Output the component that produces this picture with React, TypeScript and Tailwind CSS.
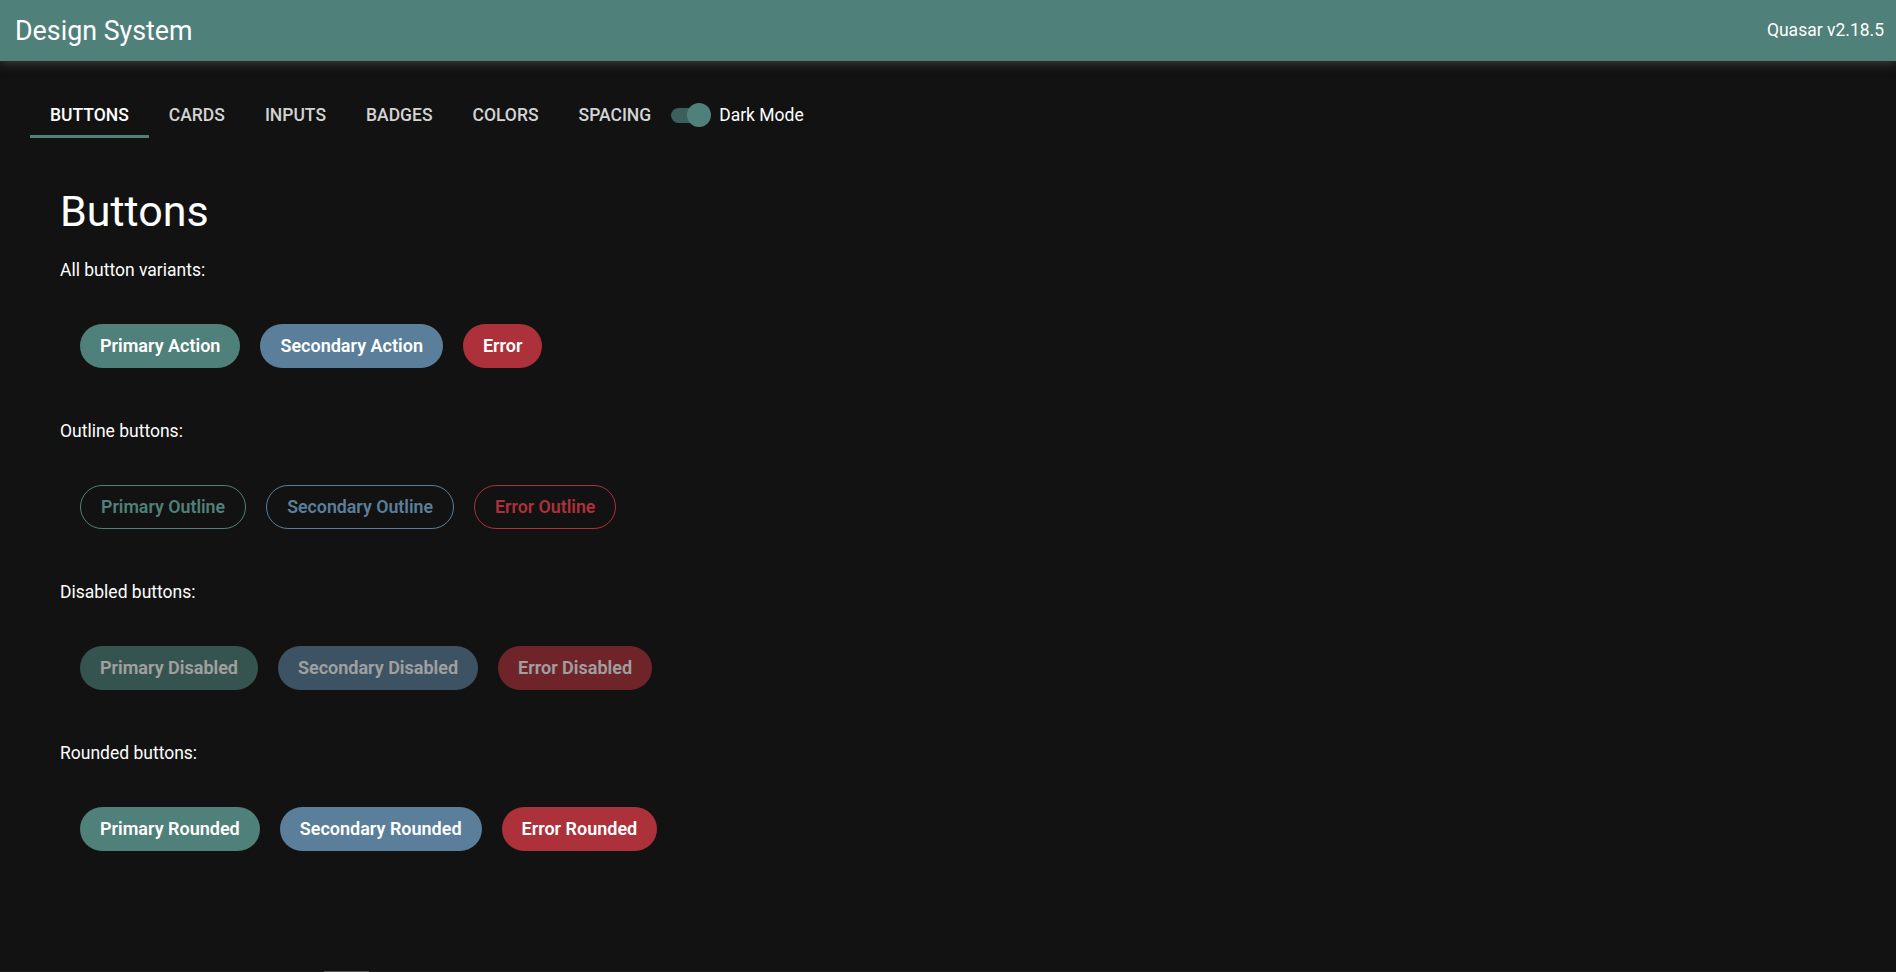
import React from 'react';

type Tone = 'primary' | 'secondary' | 'error';

const solid: Record<Tone, string> = {
  primary: 'bg-[#4f8079] text-white',
  secondary: 'bg-[#5b7f9a] text-white',
  error: 'bg-[#ad313b] text-white',
};

const outline: Record<Tone, string> = {
  primary: 'border border-[#4f8079] text-[#4f8079]',
  secondary: 'border border-[#5b7f9a] text-[#5b7f9a]',
  error: 'border border-[#ad313b] text-[#ad313b]',
};

interface BtnProps {
  label: string;
  tone: Tone;
  variant?: 'solid' | 'outline' | 'disabled';
}

const Btn: React.FC<BtnProps> = ({ label, tone, variant = 'solid' }) => {
  const look =
    variant === 'outline'
      ? `${outline[tone]} text-[17.8px]`
      : variant === 'disabled'
        ? `${solid[tone]} text-[18px] opacity-60 cursor-not-allowed`
        : `${solid[tone]} text-[18px]`;
  return (
    <button
      disabled={variant === 'disabled'}
      className={`h-[44px] px-[20px] rounded-full font-semibold leading-none whitespace-nowrap ${look}`}
    >
      {label}
    </button>
  );
};

const sections: { title: string; variant: 'solid' | 'outline' | 'disabled'; items: [string, Tone][] }[] = [
  {
    title: 'All button variants:',
    variant: 'solid',
    items: [
      ['Primary Action', 'primary'],
      ['Secondary Action', 'secondary'],
      ['Error', 'error'],
    ],
  },
  {
    title: 'Outline buttons:',
    variant: 'outline',
    items: [
      ['Primary Outline', 'primary'],
      ['Secondary Outline', 'secondary'],
      ['Error Outline', 'error'],
    ],
  },
  {
    title: 'Disabled buttons:',
    variant: 'disabled',
    items: [
      ['Primary Disabled', 'primary'],
      ['Secondary Disabled', 'secondary'],
      ['Error Disabled', 'error'],
    ],
  },
  {
    title: 'Rounded buttons:',
    variant: 'solid',
    items: [
      ['Primary Rounded', 'primary'],
      ['Secondary Rounded', 'secondary'],
      ['Error Rounded', 'error'],
    ],
  },
];

const tabs = ['Buttons', 'Cards', 'Inputs', 'Badges', 'Colors', 'Spacing'];

export default function App() {
  const [active, setActive] = React.useState('Buttons');
  const [dark, setDark] = React.useState(true);

  return (
    <div className="h-[972px] overflow-hidden flex flex-col bg-[#121212] font-['Roboto','Liberation_Sans',sans-serif]">
      <header className="relative z-10 h-[61px] shrink-0 flex items-center justify-between pl-[15px] pr-[12px] bg-[#50807a] shadow-[0_2px_10px_rgba(110,110,110,0.5)]">
        <div className="mt-[2px] text-[26.8px] text-white leading-none">Design System</div>
        <div className="text-[17.5px] text-white leading-none">Quasar v2.18.5</div>
      </header>

      <nav className="mt-[34px] pl-[30px] flex items-end">
        {tabs.map((t) => (
          <button
            key={t}
            onClick={() => setActive(t)}
            className={`h-[43px] px-[20px] flex items-center text-[17.5px] font-medium uppercase border-b-[3px] ${
              active === t ? 'text-white border-[#50807a]' : 'text-[#d4d4d4] border-transparent'
            }`}
          >
            {t}
          </button>
        ))}
        <label className="h-[43px] pb-[3px] flex items-center cursor-pointer" onClick={() => setDark(!dark)}>
          <span className="relative w-[40px] h-[24px] flex items-center">
            <span className={`w-[34px] h-[15px] rounded-full ${dark ? 'bg-[#3b5f5a]' : 'bg-[#555]'}`} />
            <span
              className={`absolute top-0 w-[24px] h-[24px] rounded-full ${dark ? 'left-[16px] bg-[#50807a]' : 'left-0 bg-[#bbb]'}`}
            />
          </span>
          <span className="ml-[8px] text-[17.5px] text-white">Dark Mode</span>
        </label>
      </nav>

      <main className="pl-[60px]">
        <h1 className="mt-[52px] text-[43px] leading-none font-normal text-white">Buttons</h1>
        {sections.map((s, i) => (
          <section key={s.title}>
            <p className={`${i === 0 ? 'mt-[25px]' : 'mt-[51px]'} text-[17.5px] leading-[24px] text-white`}>{s.title}</p>
            <div className="mt-[42px] ml-[20px] flex gap-[20px]">
              {s.items.map(([label, tone]) => (
                <Btn key={label} label={label} tone={tone} variant={s.variant} />
              ))}
            </div>
          </section>
        ))}
      </main>

      <div className="mt-auto h-px bg-[#1c1c1c]">
        <div className="ml-[324px] w-[45px] h-px bg-[#555]" />
      </div>
    </div>
  );
}
